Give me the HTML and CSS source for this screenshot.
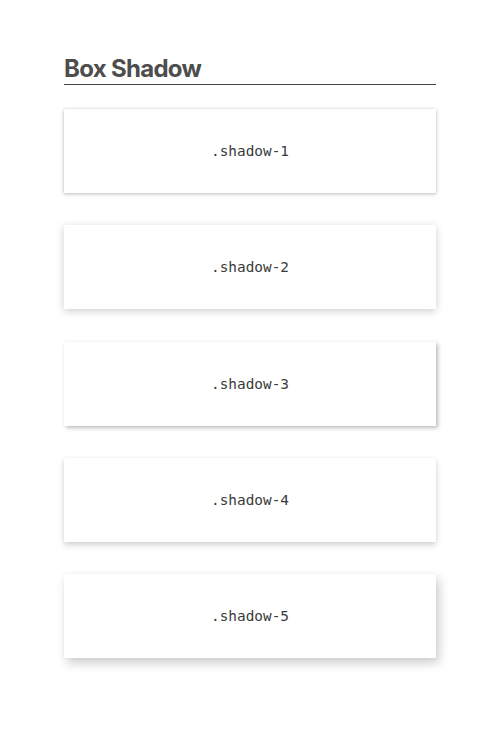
FILE: index.html
```html
<!DOCTYPE html>
<html>
<head>
<meta charset="utf-8">
<link rel="stylesheet" href="styles.css">
</head>
<body>
<main class="page">
  <h1 class="title">Box Shadow</h1>
  <div class="list">
    <div class="card shadow-1">.shadow-1</div>
    <div class="card shadow-2">.shadow-2</div>
    <div class="card shadow-3">.shadow-3</div>
    <div class="card shadow-4">.shadow-4</div>
    <div class="card shadow-5">.shadow-5</div>
  </div>
</main>
</body>
</html>
```
FILE: styles.css
```css
html, body { margin: 0; padding: 0; background: #fff; }
.page {
  padding: 54px 64px 96px 64px;
  font-family: Inter, "Liberation Sans", sans-serif;
}
.title {
  margin: 0;
  font-size: 24px;
  font-weight: 700;
  color: #4d4d4d;
  letter-spacing: -0.7px;
  line-height: 30px;
  border-bottom: 1px solid #444;
}
.list {
  display: flex;
  flex-direction: column;
  gap: 32.25px;
  margin-top: 24px;
}
.card {
  height: 84px;
  display: flex;
  align-items: center;
  justify-content: center;
  background: #fff;
  font-family: "DejaVu Sans Mono", monospace;
  font-size: 14.4px;
  color: #3a3a3a;
}
.shadow-1 { box-shadow: 0 1px 4px rgba(0,0,0,0.25), 0 0 2px rgba(0,0,0,0.08); }
.shadow-2 { box-shadow: 0 2px 8px rgba(0,0,0,0.2); }
.shadow-3 { box-shadow: 2px 2px 4px rgba(0,0,0,0.25), 0 0 2px rgba(0,0,0,0.06); }
.shadow-4 { box-shadow: 0 3px 6px rgba(0,0,0,0.18), 0 0 3px rgba(0,0,0,0.04); }
.shadow-5 { box-shadow: 3px 5px 10px rgba(0,0,0,0.2), 0 0 3px rgba(0,0,0,0.04); }
```
